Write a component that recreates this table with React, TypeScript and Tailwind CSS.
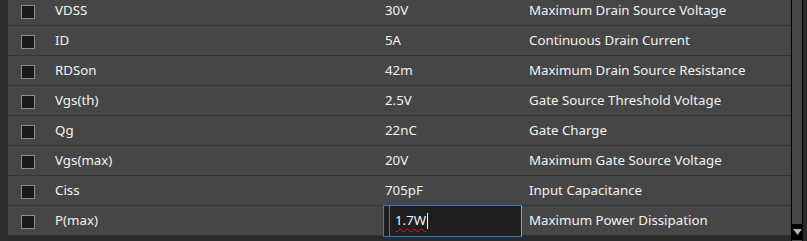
import React from 'react';

interface Param {
    name: string;
    value: string;
    desc: string;
}

const params: Param[] = [
    { name: 'VDSS', value: '30V', desc: 'Maximum Drain Source Voltage' },
    { name: 'ID', value: '5A', desc: 'Continuous Drain Current' },
    { name: 'RDSon', value: '42m', desc: 'Maximum Drain Source Resistance' },
    { name: 'Vgs(th)', value: '2.5V', desc: 'Gate Source Threshold Voltage' },
    { name: 'Qg', value: '22nC', desc: 'Gate Charge' },
    { name: 'Vgs(max)', value: '20V', desc: 'Maximum Gate Source Voltage' },
    { name: 'Ciss', value: '705pF', desc: 'Input Capacitance' },
    { name: 'P(max)', value: '1.7W', desc: 'Maximum Power Dissipation' },
];

const Checkbox = () => (
    <div className="w-[14px] h-[14px] border border-[#8c8c8c] bg-[#1a1a1a] shrink-0" />
);

const ValueEditor: React.FC<{ value: string }> = ({ value }) => (
    <div className="relative -ml-[2px] w-[139px] h-[32px] border border-[#1f7fd8] border-r-[#a0a0a0] bg-[#1e1e1e] flex items-center">
        <div className="absolute left-[5px] top-0 bottom-0 w-px bg-[#1f7fd8]" />
        <span className="relative pl-[11px] text-[#f2f2f2] underline decoration-wavy decoration-[#d02020] underline-offset-[3px] decoration-1">
            {value}
        </span>
        <span className="w-px h-[16px] bg-white ml-px" />
    </div>
);

const Row: React.FC<{ p: Param; editing?: boolean }> = ({ p, editing }) => (
    <div className="h-[30px] border-b border-[#333333] flex items-center shrink-0">
        <div className="pl-[13px] w-[47px] shrink-0 flex items-center pt-[3px]">
            <Checkbox />
        </div>
        <div className="w-[330px] shrink-0 pt-px">{p.name}</div>
        <div className="w-[144px] shrink-0 flex items-center pt-px">
            {editing ? <ValueEditor value={p.value} /> : p.value}
        </div>
        <div className="flex-1 pt-px">{p.desc}</div>
    </div>
);

export default function App() {
    return (
        <div
            className="w-[807px] h-[241px] flex bg-[#2b2b2b] overflow-hidden text-[13.3px] text-[#f2f2f2]"
            style={{ fontFamily: '"Noto Sans", "Open Sans", sans-serif' }}
        >
            <div className="w-[8px] shrink-0 bg-[#2d2d2d]" />
            <div className="flex-1 flex flex-col">
                <div className="-mt-[4px] bg-[#464646] flex flex-col">
                    {params.map((p, i) => (
                        <Row key={p.name} p={p} editing={i === params.length - 1} />
                    ))}
                </div>
            </div>
            <div className="w-[12px] shrink-0 flex flex-col bg-[#464646] border-x border-black">
                <div className="flex-1" />
                <div className="h-[16px] mb-[1px] bg-black flex items-center justify-center">
                    <svg width="9" height="6" viewBox="0 0 9 6">
                        <path d="M0 0 L9 0 L4.5 6 Z" fill="#b4b4b4" />
                    </svg>
                </div>
            </div>
            <div className="w-[4px] shrink-0 bg-[#2b2b2b]" />
        </div>
    );
}
